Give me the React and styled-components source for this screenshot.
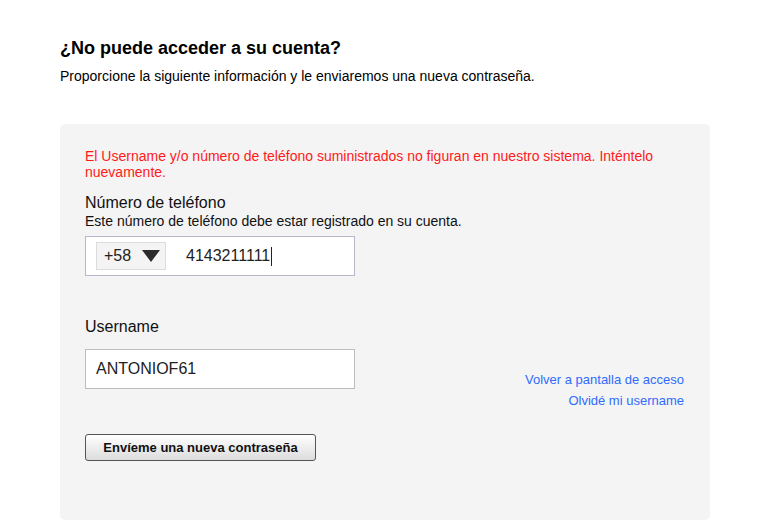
import styled, { createGlobalStyle } from 'styled-components';

const GlobalStyle = createGlobalStyle`
	html, body {
		margin: 0;
		padding: 0;
		background: #fff;
		font-family: "Liberation Sans", Arial, sans-serif;
		color: #000;
	}
`;

export default function App() {
	return (
		<>
			<GlobalStyle />
			<Page>
				<Title>¿No puede acceder a su cuenta?</Title>
				<Intro>
					Proporcione la siguiente información y le enviaremos una nueva
					contraseña.
				</Intro>
				<Panel>
					<ErrorMsg>
						El Username y/o número de teléfono suministrados no figuran en
						nuestro sistema. Inténtelo nuevamente.
					</ErrorMsg>
					<Label>Número de teléfono</Label>
					<Help>Este número de teléfono debe estar registrado en su cuenta.</Help>
					<Field>
						<CodeSelect>
							<span>+58</span>
							<Arrow viewBox='0 0 18 12'>
								<path d='M0 0 H18 L9 12 Z' fill='#2b2b2b' />
							</Arrow>
						</CodeSelect>
						<Value>
							4143211111
							<Caret />
						</Value>
					</Field>
					<Row>
						<Column>
							<Label $top>Username</Label>
							<Field $plain>
								<Value $plain>ANTONIOF61</Value>
							</Field>
						</Column>
						<Links>
							<Link href='#'>Volver a pantalla de acceso</Link>
							<Link href='#'>Olvidé mi username</Link>
						</Links>
					</Row>
					<SubmitBtn type='button'>Envíeme una nueva contraseña</SubmitBtn>
				</Panel>
			</Page>
		</>
	);
}

const Page = styled.div`
	padding: 38px 57px 12px 60px;
`;
const Title = styled.h1`
	margin: 0;
	font-size: 18px;
	line-height: 20px;
	font-weight: bold;
`;
const Intro = styled.p`
	margin: 10px 0 0;
	font-size: 14px;
	line-height: 16px;
`;
const Panel = styled.div`
	margin-top: 40px;
	background: #f4f4f4;
	border-radius: 5px;
	padding: 24px 25px 59px;
`;
const ErrorMsg = styled.div`
	color: #ff1a1a;
	font-size: 14px;
	line-height: 16px;
`;
const Label = styled.div`
	margin-top: ${(p) => (p.$top ? '0' : '14px')};
	font-size: 16px;
	line-height: 18px;
	color: #111;
	${(p) => (p.$top ? 'padding-top: 1px;' : '')}
`;
const Help = styled.div`
	margin-top: 1px;
	font-size: 14px;
	line-height: 16px;
	color: #111;
`;
const Field = styled.div`
	box-sizing: border-box;
	width: 270px;
	height: 40px;
	margin-top: ${(p) => (p.$plain ? '13px' : '7px')};
	background: #fff;
	border: 1px solid ${(p) => (p.$plain ? '#bdbdbd' : '#b4b7c9')};
	display: flex;
	align-items: center;
	padding: 0 10px;
`;
const CodeSelect = styled.div`
	box-sizing: border-box;
	width: 70px;
	height: 28px;
	background: #f4f4f4;
	border: 1px solid #dcdcdc;
	display: flex;
	align-items: center;
	justify-content: space-between;
	padding: 0 5px 0 7px;
	font-size: 16px;
	color: #222;
`;
const Arrow = styled.svg`
	width: 18px;
	height: 12px;
`;
const Value = styled.div`
	display: flex;
	align-items: center;
	margin-left: ${(p) => (p.$plain ? '0' : '20px')};
	font-size: 16px;
	color: #222;
`;
const Caret = styled.span`
	display: inline-block;
	width: 1px;
	height: 19px;
	margin-left: 1px;
	background: #222;
`;
const Row = styled.div`
	display: flex;
	justify-content: space-between;
	align-items: flex-start;
	margin-top: 41px;
`;
const Column = styled.div`
	display: flex;
	flex-direction: column;
`;
const Links = styled.div`
	display: flex;
	flex-direction: column;
	align-items: flex-end;
	gap: 5px;
	padding-top: 55px;
	margin-right: 1px;
`;
const Link = styled.a`
	font-size: 13px;
	line-height: 16px;
	color: #2f6bff;
	text-decoration: none;
`;
const SubmitBtn = styled.button`
	display: block;
	margin-top: 25px;
	width: 231px;
	height: 27px;
	padding: 0;
	font-family: "Liberation Sans", Arial, sans-serif;
	font-size: 13px;
	font-weight: bold;
	color: #111;
	background: linear-gradient(#ffffff, #dcdcdc);
	border: 1px solid #555;
	border-radius: 3px;
	cursor: pointer;
`;
